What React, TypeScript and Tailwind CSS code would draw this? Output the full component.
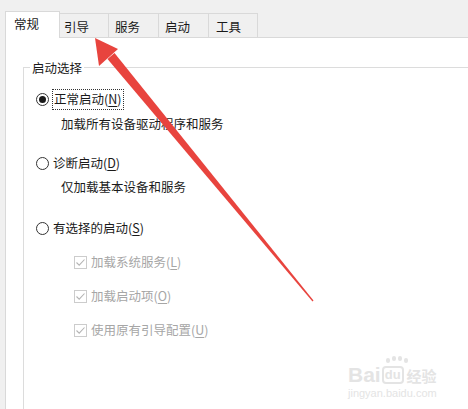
import React from "react";

const U = ({ c }: { c: string }) => <span className="underline underline-offset-[2px]">{c}</span>;

function Radio({ checked }: { checked?: boolean }) {
  return (
    <div className="w-[13px] h-[13px] rounded-full border border-[#333333] bg-white flex items-center justify-center shrink-0">
      {checked && <div className="w-[7px] h-[7px] rounded-full bg-[#1a1a1a]" />}
    </div>
  );
}

function Check() {
  return (
    <div className="w-[13px] h-[13px] border border-[#cccccc] bg-white flex items-center justify-center shrink-0">
      <svg width="11" height="11" viewBox="0 0 11 11">
        <path d="M1.5 5.5 L4.2 8.2 L9.5 2.5" fill="none" stroke="#b4b4b4" strokeWidth="1.1" />
      </svg>
    </div>
  );
}

export default function App() {
  const inactive = [
    { t: "引导", w: "w-[49px]", pl: "pl-[4px]" },
    { t: "服务", w: "w-[50px]", pl: "pl-[6px]" },
    { t: "启动", w: "w-[50px]", pl: "pl-[6px]" },
    { t: "工具", w: "w-[49px]", pl: "pl-[7px]" },
  ];
  return (
    <div className="relative w-[468px] h-[409px] overflow-hidden bg-[#f0f0f0] flex flex-col font-['Noto_Sans_CJK_SC','Noto_Sans',sans-serif] text-[12.5px] leading-[16px] text-[#1a1a1a]">
      {/* tab strip */}
      <div className="h-[37px] flex items-end pl-[5px] relative z-10 shrink-0">
        <div className="w-[55px] h-[27px] -mb-px bg-white border-l border-t border-r border-[#d9d9d9] pl-[8px] pt-[4px]">
          常规
        </div>
        {inactive.map((x) => (
          <div
            key={x.t}
            className={`${x.w} ${x.pl} h-[24px] border-t border-r border-[#d9d9d9] bg-[#f0f0f0] pt-[5px]`}
          >
            {x.t}
          </div>
        ))}
      </div>

      {/* panel */}
      <div className="flex-1 ml-[5px] border-l border-t border-[#d9d9d9] bg-white pl-[17px] pt-[29px] flex flex-col">
        <div className="relative flex-1 border-l border-t border-[#dcdcdc] pl-[12px] pt-[19px] flex flex-col">
          <div className="absolute -top-[8px] left-[6px] bg-white px-[2px] leading-[16px]">启动选择</div>

          <div className="h-[24px] flex items-center">
            <Radio checked />
            <span className="ml-[3px] h-[21px] flex items-center border border-dotted border-[#333333] pl-[1px] pr-[1px]">
              正常启动(<U c="N" />)
            </span>
          </div>
          <div className="h-[24px] mt-[1px] flex items-center pl-[25px]">加载所有设备驱动程序和服务</div>

          <div className="h-[24px] mt-[15px] flex items-center">
            <Radio />
            <span className="ml-[4px]">诊断启动(<U c="D" />)</span>
          </div>
          <div className="h-[24px] flex items-center pl-[25px]">仅加载基本设备和服务</div>

          <div className="h-[24px] mt-[17px] flex items-center">
            <Radio />
            <span className="ml-[4px]">有选择的启动(<U c="S" />)</span>
          </div>

          <div className="h-[24px] mt-[10px] flex items-center pl-[38px] text-[#a6a6a6]">
            <Check />
            <span className="ml-[4px]">加载系统服务(<U c="L" />)</span>
          </div>
          <div className="h-[24px] mt-[10px] flex items-center pl-[38px] text-[#a6a6a6]">
            <Check />
            <span className="ml-[4px]">加载启动项(<U c="O" />)</span>
          </div>
          <div className="h-[24px] mt-[10px] flex items-center pl-[38px] text-[#a6a6a6]">
            <Check />
            <span className="ml-[4px]">使用原有引导配置(<U c="U" />)</span>
          </div>
        </div>
      </div>

      {/* watermark */}
      <div className="absolute left-[348px] top-[362px] flex flex-col items-start text-[#e4e4e4] pointer-events-none">
        <div className="flex items-end h-[24px]">
          <span className="font-['Liberation_Sans',sans-serif] font-bold text-[21px] leading-[22px]">Bai</span>
          <span className="relative ml-[1px] font-['Liberation_Sans',sans-serif] font-bold text-[13px] leading-[14px] border-[2px] border-[#e4e4e4] rounded-[4px] px-[1px] mb-[2px]">
            du
            <span className="absolute -top-[10px] left-[2px] flex gap-[2px]">
              <span className="w-[4px] h-[5px] rounded-full bg-[#e4e4e4]" />
              <span className="w-[4px] h-[5px] rounded-full bg-[#e4e4e4] -mt-[2px]" />
              <span className="w-[4px] h-[5px] rounded-full bg-[#e4e4e4] -mt-[2px]" />
              <span className="w-[4px] h-[5px] rounded-full bg-[#e4e4e4]" />
            </span>
          </span>
          <span className="ml-[3px] text-[15px] leading-[20px] font-bold">经验</span>
        </div>
        <span className="font-['Liberation_Sans',sans-serif] text-[11px] leading-[12px] mt-[1px]">jingyan.baidu.com</span>
      </div>

      {/* red arrow */}
      <svg className="absolute inset-0 pointer-events-none" width="468" height="409" viewBox="0 0 468 409">
        <polygon points="114.5,53.1 313.5,300.6 312.5,301.4 107.5,58.9" fill="#e8443e" />
        <polygon points="95,38 99,66 118,49" fill="#e8443e" />
      </svg>
    </div>
  );
}
